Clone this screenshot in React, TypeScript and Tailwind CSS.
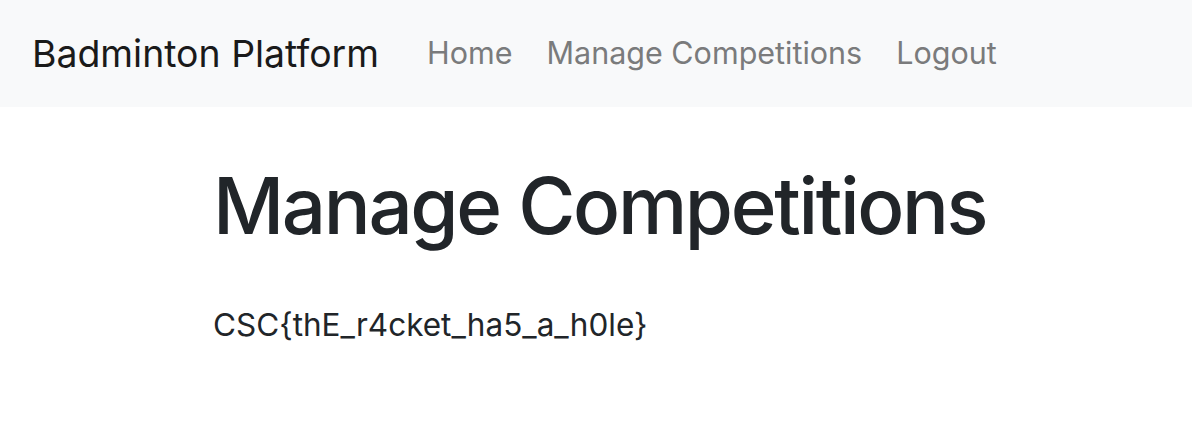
export default function App() {
  const font = { fontFamily: "Inter, 'Noto Sans', sans-serif" }
  return (
    <div className="min-h-[426px] bg-white" style={font}>
      <nav className="flex h-[107px] items-center bg-[#f8f9fa] pl-[32px]">
        <a className="mr-[48px] text-[37.4px] leading-none text-[#1a1a1a]">Badminton Platform</a>
        <div className="flex items-center gap-[34px] text-[30.5px] leading-none text-[#7a7b7c]">
          <a>Home</a>
          <a>Manage Competitions</a>
          <a>Logout</a>
        </div>
      </nav>
      <main className="pl-[213px] pt-[52px]">
        <h1 className="text-[78px] font-medium leading-[1.2] text-[#212529] tracking-[-0.03em]">Manage Competitions</h1>
        <p className="mt-[56px] text-[31.5px] leading-none text-[#212529]">CSC{"{"}thE_r4cket_ha5_a_h0le{"}"}</p>
      </main>
    </div>
  )
}
